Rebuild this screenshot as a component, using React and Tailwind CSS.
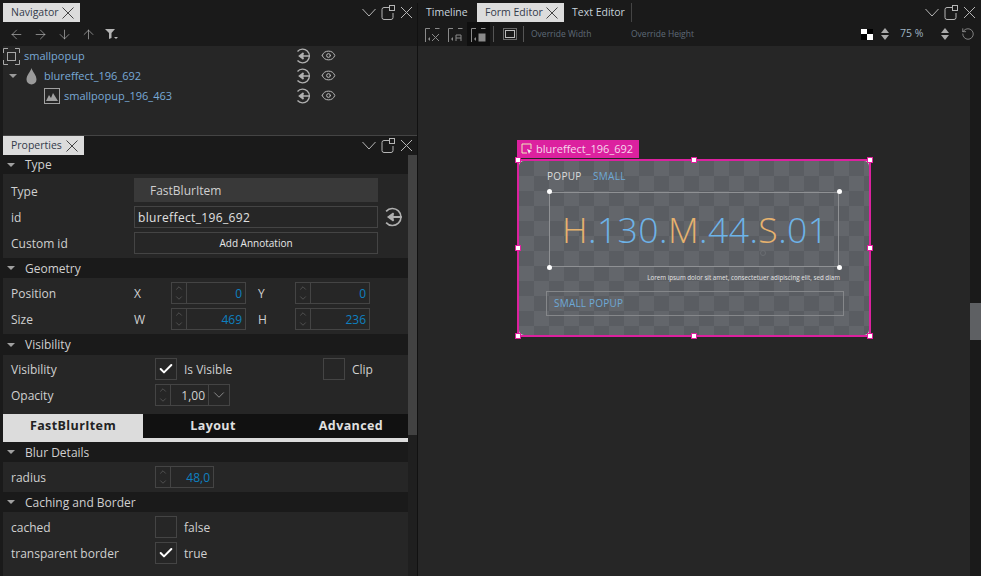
import { ArrowLeft, ArrowRight, ArrowDown, ArrowUp, ChevronDown, ChevronUp, Check, Eye, RotateCcw } from "lucide-react";

const font = { fontFamily: '"Open Sans", sans-serif' };

function PanelButtons() {
    return (
        <div className="flex items-center gap-[5px] text-[#b5b5b5]">
            <svg width="14" height="15" viewBox="0 0 14 15" fill="none" stroke="currentColor">
                <path d="M.5 4l6.500 7 6.500-7" />
            </svg>
            <svg width="14" height="15" viewBox="0 0 14 15" fill="none" stroke="currentColor">
                <path d="M8 2.500H3a2 2 0 0 0-2 2v8a2 2 0 0 0 2 2h7a2 2 0 0 0 2-2V8" />
                <rect x="8.500" y=".5" width="5" height="5" />
            </svg>
            <svg width="13" height="15" viewBox="0 0 13 15" fill="none" stroke="currentColor">
                <path d="M1 2l11 11M12 2L1 13" />
            </svg>
        </div>
    );
}

function Tab({ label, active, close, w }) {
    return (
        <div
            className={
                "flex h-[19px] items-center justify-between pl-2 pr-[6px] text-[10.5px] " +
                (active ? "bg-[#dcdcdc] text-[#333a4a]" : "text-[#c8d4dc]")
            }
            style={{ width: w }}
        >
            <span>{label}</span>
            {close && (
                <svg width="12" height="12" viewBox="0 0 12 12" fill="none" stroke="#444">
                    <path d="M.5 .5l11 11M11.500 .5l-11 11" />
                </svg>
            )}
        </div>
    );
}

function GotoIcon({ className = "" }) {
    return (
        <svg width="16" height="16" viewBox="0 0 16 16" fill="none" stroke="#b0b0b0" className={className}>
            <path d="M2.500 3.500A6.800 6.800 0 1 1 2.500 12.500" strokeWidth="1.3" />
            <path d="M15 8H5M8.500 5L4.500 8l4 3" strokeWidth="1.6" fill="#b0b0b0" />
        </svg>
    );
}

function NavRow({ indent, arrow, icon, iconClass = "", label }) {
    return (
        <div className="relative flex h-5 items-center text-[11px] text-[#78a9d6]">
            <div className="flex items-center" style={{ width: indent }}>
                {arrow && <span className="ml-[6px] h-0 w-0 border-x-[4px] border-t-[4px] border-x-transparent border-t-[#9a9a9a]" />}
                <span className={"ml-auto flex " + iconClass}>{icon}</span>
            </div>
            <span className="ml-[4px]">{label}</span>
            <GotoIcon className="absolute left-[292px] top-[2px]" />
            <Eye size={15} strokeWidth={1.6} className="absolute left-[318px] top-[2px] text-[#b8b8b8]" />
        </div>
    );
}

function SectionHead({ label, h = "h-[20px]" }) {
    return (
        <div className={"flex items-center bg-[#1a1a1a] text-[12px] text-[#d0d0d0] " + h}>
            <span className="ml-[4px] h-0 w-0 border-x-[4px] border-t-[4px] border-x-transparent border-t-[#a0a0a0]" />
            <span className="ml-[10px] pt-px">{label}</span>
        </div>
    );
}

function Row({ label, children }) {
    return (
        <div className="flex h-[26px] items-center text-[12px] text-[#d0d0d0]">
            <span className="ml-[8px] w-[123px] shrink-0 pt-[2px]">{label}</span>
            {children}
        </div>
    );
}

function Spin({ value, w = "w-[75px]", blue = true, trail }) {
    return (
        <div className={"flex h-[22px] items-stretch border border-[#444] " + w}>
            <div className="flex w-[15px] shrink-0 flex-col items-center justify-center border-r border-[#444] text-[#8a8a8a]">
                <ChevronUp size={12} strokeWidth={1} />
                <ChevronDown size={12} strokeWidth={1} />
            </div>
            <div className={"flex flex-1 items-center justify-end pr-[3px] pt-px text-[12px] " + (blue ? "text-[#0e80c0]" : "text-[#d0d0d0]")}>
                {value}
            </div>
            {trail}
        </div>
    );
}

function Box({ checked }) {
    return (
        <div className="flex h-[22px] w-[22px] items-center justify-center border border-[#444]">
            {checked && <Check size={16} strokeWidth={3} className="text-white" />}
        </div>
    );
}

function Navigator() {
    return (
        <div className="flex h-[132px] flex-col">
            <div className="flex h-[19px] items-center justify-between pr-[4px]">
                <Tab label="Navigator" active close w={77} />
                <PanelButtons />
            </div>
            <div className="flex h-6 items-center gap-[9px] bg-[#1a1a1a] pl-[6px] text-[#c4c4c4]">
                <ArrowLeft size={15} strokeWidth={1} />
                <ArrowRight size={15} strokeWidth={1} />
                <ArrowDown size={15} strokeWidth={1} />
                <ArrowUp size={15} strokeWidth={1} />
                <svg width="14" height="12" viewBox="0 0 14 12" fill="#b5b5b5">
                    <path d="M0 1h10L6.500 5v5L4 11V5z" />
                    <path d="M9 9h4l-2 2z" />
                </svg>
            </div>
            <div className="flex-1 bg-[#262626]">
                <NavRow
                    indent={17}
                    label="smallpopup"
                    icon={
                        <svg width="17" height="17" viewBox="0 0 17 17" fill="none" stroke="#a8a8a8">
                            <path d="M.5 5V.5H5M12 .5h4.500V5M.5 12v4.500H5M12 16.500h4.500V12" />
                            <rect x="4.500" y="4.500" width="8" height="8" />
                        </svg>
                    }
                />
                <NavRow
                    indent={37}
                    arrow
                    label="blureffect_196_692"
                    iconClass="mr-[3px]"
                    icon={
                        <svg width="11" height="17" viewBox="0 0 11 17" fill="#9a9a9a">
                            <path d="M5.500 0C6.500 4 10.500 7 10.500 11.500a5 5 0 0 1-10 0C.5 7 4.500 4 5.500 0z" />
                        </svg>
                    }
                />
                <NavRow
                    indent={57}
                    label="smallpopup_196_463"
                    icon={
                        <svg width="16" height="16" viewBox="0 0 16 16" fill="none" stroke="#a0a0a0">
                            <rect x=".5" y=".5" width="15" height="15" />
                            <path d="M2 13l3-6 2 3 2-5 5 8z" fill="#a0a0a0" stroke="none" />
                        </svg>
                    }
                />
            </div>
        </div>
    );
}

function Properties() {
    return (
        <div className="flex flex-1 flex-col border-t border-[#444]">
            <div className="flex h-[19px] shrink-0 items-center justify-between pr-[4px]">
                <Tab label="Properties" active close w={81} />
                <PanelButtons />
            </div>
            <div className="flex flex-1">
                <div className="w-[405px] shrink-0">
                    <SectionHead label="Type" h="h-[19px]" />
                    <div className="bg-[#262626] pb-[2px] pt-[4px]">
                        <Row label="Type">
                            <div className="mb-[2px] flex h-[24px] w-[244px] items-center bg-[#393939] pl-4 pt-[2px] text-[#d0d0d0]">FastBlurItem</div>
                        </Row>
                        <Row label="id">
                            <div className="flex h-[22px] w-[244px] items-center border border-[#444] pl-[3px] pt-px tracking-[0.35px] text-[#e0e0e0]">blureffect_196_692</div>
                            <GotoIcon className="ml-[5px] h-[20px] w-[20px]" />
                        </Row>
                        <Row label="Custom id">
                            <div className="flex h-[22px] w-[244px] items-center justify-center border border-[#444] text-[10px] text-[#e8e8e8]">Add Annotation</div>
                        </Row>
                    </div>
                    <SectionHead label="Geometry" />
                    <div className="bg-[#262626] py-[2px]">
                        <Row label="Position">
                            <span className="w-[37px] pt-[2px]">X</span>
                            <Spin value="0" />
                            <span className="ml-[12px] w-[37px] pt-[2px]">Y</span>
                            <Spin value="0" />
                        </Row>
                        <Row label="Size">
                            <span className="w-[37px] pt-[2px]">W</span>
                            <Spin value="469" />
                            <span className="ml-[12px] w-[37px] pt-[2px]">H</span>
                            <Spin value="236" />
                        </Row>
                    </div>
                    <SectionHead label="Visibility" h="h-[21px]" />
                    <div className="h-[59px] bg-[#262626] pt-px">
                        <Row label="Visibility">
                            <div className="ml-[21px]"><Box checked /></div>
                            <span className="ml-[7px] w-[139px] pt-[2px]">Is Visible</span>
                            <Box />
                            <span className="ml-[7px] pt-[2px]">Clip</span>
                        </Row>
                        <Row label="Opacity">
                            <div className="ml-[21px]">
                                <Spin
                                    value="1,00"
                                    blue={false}
                                    trail={
                                        <div className="flex w-[21px] shrink-0 items-center justify-center border-l border-[#444] text-[#aaa]">
                                            <ChevronDown size={18} strokeWidth={1} />
                                        </div>
                                    }
                                />
                            </div>
                        </Row>
                    </div>
                    <div className="flex h-[24px] bg-[#111] text-[12.5px] font-bold tracking-[0.4px] text-[#e0e0e0]">
                        <div className="flex w-[140px] shrink-0 items-center justify-center bg-[#dcdcdc] text-[#222]">FastBlurItem</div>
                        <div className="flex w-[140px] shrink-0 items-center justify-center">Layout</div>
                        <div className="flex w-[136px] shrink-0 items-center justify-center">Advanced</div>
                    </div>
                    <div className="h-[4px] bg-[#dcdcdc]" />
                    <SectionHead label="Blur Details" />
                    <div className="flex h-[30px] items-center bg-[#262626]">
                        <Row label="radius">
                            <div className="ml-[21px]"><Spin value="48,0" w="w-[59px]" /></div>
                        </Row>
                    </div>
                    <SectionHead label="Caching and Border" />
                    <div className="h-[64px] bg-[#262626] pt-[2px]">
                        <Row label="cached">
                            <div className="ml-[21px]"><Box /></div>
                            <span className="ml-[7px] pt-[2px]">false</span>
                        </Row>
                        <Row label="transparent border">
                            <div className="ml-[21px]"><Box checked /></div>
                            <span className="ml-[7px] pt-[2px]">true</span>
                        </Row>
                    </div>
                </div>
                <div className="w-[10px] bg-[#1f1f1f]">
                    <div className="h-[280px] w-full bg-[#424242]" />
                </div>
            </div>
        </div>
    );
}

function Updown({ className = "" }) {
    return (
        <div className={"flex flex-col gap-[2px] " + className}>
            <span className="h-0 w-0 border-x-[4px] border-b-[5px] border-x-transparent border-b-[#aaa]" />
            <span className="h-0 w-0 border-x-[4px] border-t-[5px] border-x-transparent border-t-[#aaa]" />
        </div>
    );
}

function FormToolbar() {
    const anchor = (glyph, active) => (
        <div className={"flex h-6 w-[23px] items-center justify-center " + (active ? "bg-[#0f0f0f]" : "")}>
            <svg width="15" height="15" viewBox="0 0 15 15" fill="none" stroke="#8a8a8a">
                <path d="M.5 15V1.500H5M10 1.500h4.500" />
                <path d="M5 10l-2 2 2 2z" fill="#8a8a8a" stroke="none" />
                {glyph}
            </svg>
        </div>
    );
    return (
        <div className="flex h-6 items-center bg-[#1a1a1a]">
            <div className="flex w-[310px] items-center pl-[3px]">
                {anchor(<path d="M7 7l7 7M14 7l-7 7" />)}
                {anchor(<path d="M8 14V8h5v6M8 11h5" />)}
                {anchor(<rect x="8" y="7" width="6" height="7" fill="#8a8a8a" />, true)}
                <div className="mx-[3px] h-4 w-px bg-[#555]" />
                <div className="flex h-6 w-[26px] items-center justify-center">
                    <svg width="14" height="12" viewBox="0 0 14 12" fill="none" stroke="#bbb">
                        <rect x=".5" y=".5" width="13" height="11" strokeDasharray="1 1" />
                        <rect x="2.500" y="2.500" width="9" height="7" />
                    </svg>
                </div>
                <div className="h-4 w-px bg-[#555]" />
                <span className="ml-[7px] w-[100px] text-[8.5px] text-[#5f6a78]">Override Width</span>
                <span className="text-[8.5px] text-[#5f6a78]">Override Height</span>
            </div>
            <div className="ml-auto flex items-center pr-[6px] text-[#aaa]">
                <div className="grid h-[11px] w-[12px] grid-cols-2 grid-rows-2 bg-black">
                    <span className="bg-white" />
                    <span />
                    <span />
                    <span className="bg-white" />
                </div>
                <Updown className="ml-[8px]" />
                <span className="ml-[11px] w-[41px] text-[10.5px] text-[#9fb4c4]">75 %</span>
                <Updown />
                <RotateCcw size={14} strokeWidth={1.2} className="ml-[12px]" />
            </div>
        </div>
    );
}

function Handle({ className }) {
    return <span className={"absolute h-[6px] w-[6px] border border-[#e0209f] bg-white " + className} />;
}

function Dot({ className }) {
    return <span className={"absolute h-[5px] w-[5px] rounded-full bg-white " + className} />;
}

function Canvas() {
    return (
        <div className="relative flex-1 overflow-hidden bg-[#262626]">
            <div className="absolute right-0 top-0 h-full w-[11px] bg-[#1a1a1a]">
                <div className="absolute top-[257px] h-[37px] w-full bg-[#5e6063]" />
            </div>
            <div className="absolute left-[99px] top-[94px] flex h-[18px] w-[122px] items-center bg-[#dc219f] pl-[4px] text-[11px] text-[#f6d8ec]">
                <svg width="12" height="12" viewBox="0 0 12 12" fill="none" stroke="#eeb">
                    <path d="M6 10H1V1h9v5" />
                    <path d="M6 6l5 2-2 1-1 2z" fill="#eee" stroke="none" />
                </svg>
                <span className="ml-[3px]">blureffect_196_692</span>
            </div>
            <div className="absolute left-[99px] top-[113px] h-[178px] w-[354px] border-2 border-[#dc219f] bg-[#d8d8d8]">
                <div className="absolute inset-0 rounded-[5px] bg-[#5b5e63] bg-[conic-gradient(#63666b_25%,#5a5d62_0_50%,#63666b_0_75%,#5a5d62_0)] bg-[length:30px_30px]" />
                <span className="absolute left-[28px] top-[8px] text-[10px] tracking-[0.3px] text-[#dcdcdc]">POPUP</span>
                <span className="absolute left-[74px] top-[8px] text-[10px] tracking-[0.3px] text-[#6ea9d6]">SMALL</span>
                <div className="absolute left-[30px] top-[31px] h-[75px] w-[290px] border border-[#8f9194]" />
                <Dot className="left-[28px] top-[28px]" />
                <Dot className="left-[318px] top-[28px]" />
                <Dot className="left-[28px] top-[104px]" />
                <Dot className="left-[318px] top-[104px]" />
                <span className="absolute left-[241px] top-[89px] h-[6px] w-[6px] rounded-full border border-[#6a6d72]" />
                <div className="absolute left-[43px] top-[46px] whitespace-nowrap text-[35.500px] font-light leading-[44px] tracking-[0.45px] text-[#6db3e8]">
                    <span className="text-[#e6b26e]">H</span>.130.<span className="text-[#e6b26e]">M</span>.44.<span className="text-[#e6b26e]">S</span>.01
                </div>
                <span className="absolute right-[29px] top-[112px] whitespace-nowrap text-[6.250px] text-[#e4e4e4]">
                    Lorem ipsum dolor sit amet, consectetuer adipiscing elit, sed diam
                </span>
                <div className="absolute left-[27px] top-[130px] flex h-[25px] w-[298px] items-center border border-[#85878a] pl-[7px] text-[10px] tracking-[0.2px] text-[#6ea9d6]">
                    SMALL POPUP
                </div>
                <Handle className="-left-[4px] -top-[4px]" />
                <Handle className="left-[172px] -top-[4px]" />
                <Handle className="-right-[4px] -top-[4px]" />
                <Handle className="-left-[4px] top-[84px]" />
                <Handle className="-right-[4px] top-[84px]" />
                <Handle className="-left-[4px] -bottom-[4px]" />
                <Handle className="left-[172px] -bottom-[4px]" />
                <Handle className="-right-[4px] -bottom-[4px]" />
            </div>
        </div>
    );
}

export default function App() {
    return (
        <div className="flex h-[576px] w-[981px] overflow-hidden bg-[#1a1a1a] pt-[3px]" style={font}>
            <div className="flex w-[418px] shrink-0 flex-col border-r border-[#111] pl-[3px]">
                <Navigator />
                <Properties />
            </div>
            <div className="flex flex-1 flex-col">
                <div className="flex h-[19px] shrink-0 items-center justify-between pr-[5px]">
                    <div className="flex items-center">
                        <Tab label="Timeline" w={59} />
                        <Tab label="Form Editor" active close w={87} />
                        <Tab label="Text Editor" w={67} />
                        <div className="h-[19px] w-px bg-[#444]" />
                    </div>
                    <PanelButtons />
                </div>
                <FormToolbar />
                <Canvas />
            </div>
        </div>
    );
}
